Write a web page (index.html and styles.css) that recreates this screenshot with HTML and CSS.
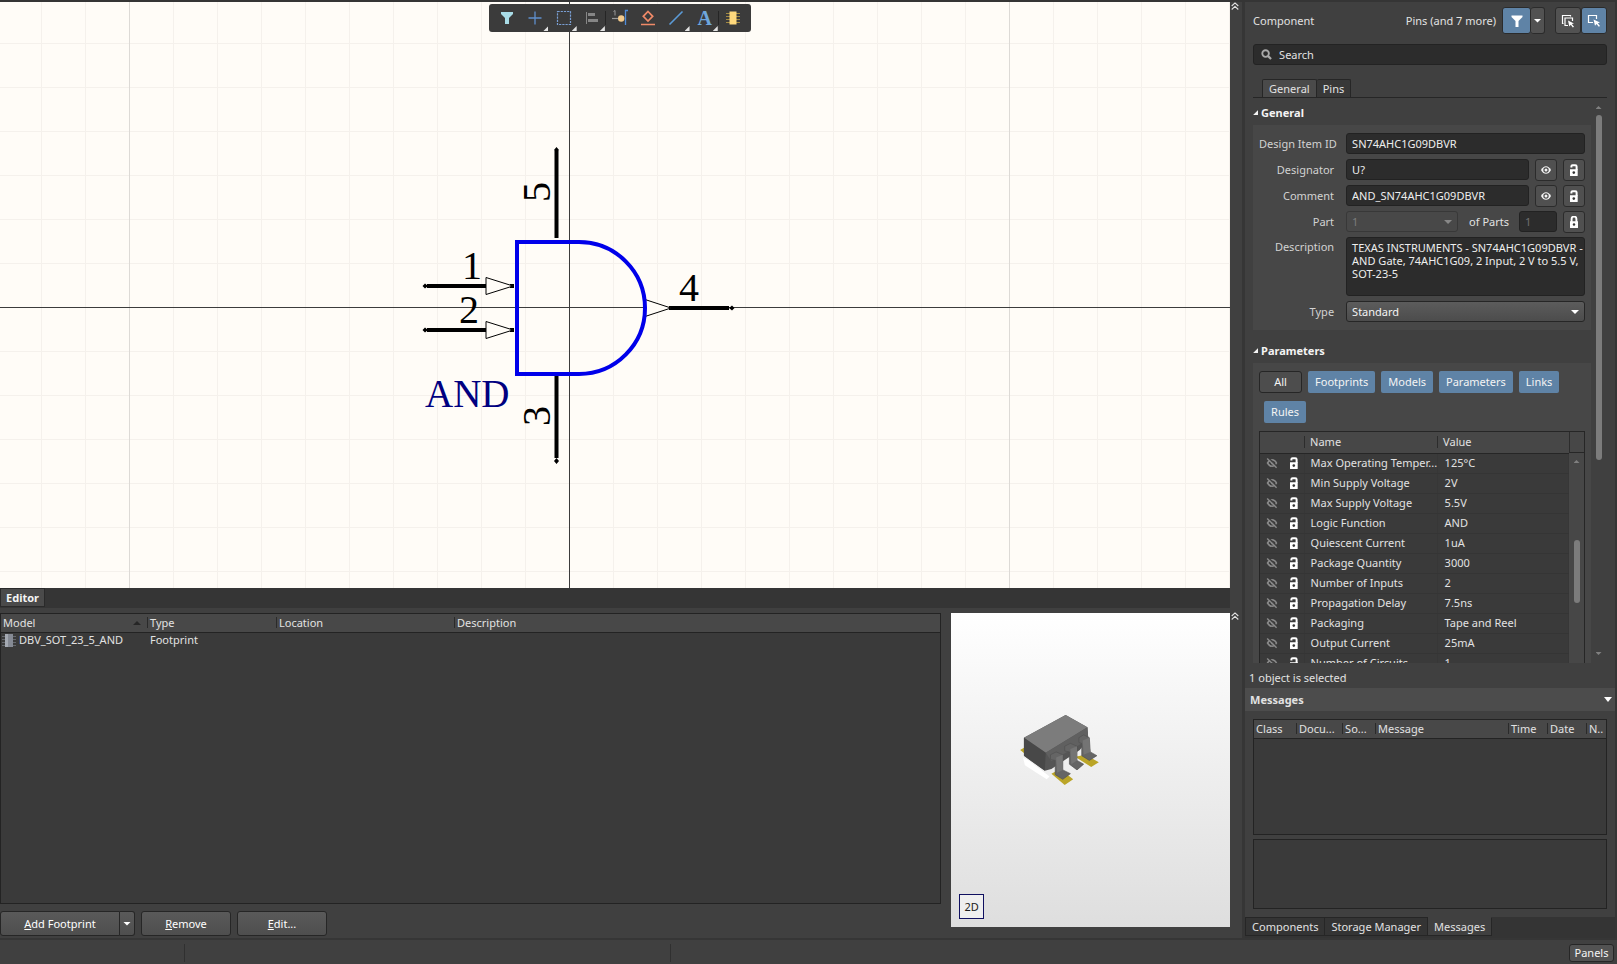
FILE: index.html
```
<!DOCTYPE html>
<html lang="en">
<head>
<meta charset="utf-8">
<title>Schematic Library Editor</title>
<link rel="stylesheet" href="styles.css">
</head>
<body>
<svg class="sprites" aria-hidden="true">
  <symbol id="eye" viewBox="0 0 12 12"><path d="M1 6C2.500 3.300 4 2.200 6 2.200S9.500 3.300 11 6C9.500 8.700 8 9.800 6 9.800S2.500 8.700 1 6Z" fill="#f4f4f4"/><circle cx="6" cy="6" r="2.700" fill="#4a4a4a"/><circle cx="6" cy="6" r="1.500" fill="#f4f4f4"/></symbol>
  <symbol id="eye-off" viewBox="0 0 12 12"><path d="M1.500 6C3 3.500 4.500 2.700 6 2.700S9.200 3.500 10.500 6C9.200 8.500 7.500 9.300 6 9.300S3 8.500 1.500 6Z" fill="none" stroke="#8a8a8a" stroke-width="1.500"/><circle cx="6.500" cy="6" r="1.500" fill="#8a8a8a"/><path d="M2.300 .8 11 9.500" stroke="#3a3a3a" stroke-width="1.300"/><path d="M1.200 1.400 10.600 10.800" stroke="#8a8a8a" stroke-width="1.400"/></symbol>
  <symbol id="unlocked" viewBox="0 0 12 12"><path d="M3.400 3.500V2.200Q3.400 1.200 4.500 1.200H7.300Q8.600 1.200 8.600 2.500V6" fill="none" stroke="#fff" stroke-width="2"/><path d="M2 5.300H9.700V11.500Q9.700 12 9.200 12H2.500Q2 12 2 11.500Z" fill="#fff"/><circle cx="5.800" cy="8.600" r="1.300" fill="#333"/></symbol>
  <symbol id="locked" viewBox="0 0 12 12"><path d="M3.600 6V3A2.400 2.400 0 0 1 8.400 3V6" fill="none" stroke="#fff" stroke-width="1.900"/><path d="M2 5.300H10V11.500Q10 12 9.500 12H2.500Q2 12 2 11.500Z" fill="#fff"/><circle cx="6" cy="8.500" r="1.200" fill="#333"/></symbol>
  <symbol id="collapse" viewBox="0 0 8 8"><path d="M.7 4 4 .9 7.300 4M.7 7.500 4 4.400 7.300 7.500" fill="none" stroke="#e4e4e4" stroke-width="1.100"/></symbol>
</svg>

<div class="workspace">
  <main class="document">
    <section class="canvas" aria-label="Symbol canvas">
      <svg class="drawing">
        <defs>
          <pattern id="minor" x="41" y="41" width="44" height="44" patternUnits="userSpaceOnUse"><path d="M0 .5H44M.5 0V44" stroke="#f5f1ec"/></pattern>
          <pattern id="major" x="129" y="-135" width="440" height="440" patternUnits="userSpaceOnUse"><path d="M0 .5H440M.5 0V440" stroke="#dddad6"/></pattern>
        </defs>
        <rect width="100%" height="100%" fill="url(#minor)"/>
        <rect width="100%" height="100%" fill="url(#major)"/>
        <path d="M0 305.500H4000M569.500 0V2000" stroke="#3c3c3c"/>
        <g stroke="#000" stroke-width="4" fill="none">
          <path d="M556.500 149V236M556.500 374V456M427 284H487M427 328H487M669 306H729"/>
          <path d="M510 284H514M510 328H514"/>
        </g>
        <path d="M486 275.500V292.500L513 284ZM486 319.500V336.500L513 328ZM645 297.500V314.500L671 306Z" fill="#fffcf7" stroke="#000"/>
        <path d="M422.500 284 425 281.500 428 284 425 286.500ZM422.500 328 425 325.500 428 328 425 330.500ZM734.500 306 732 303.500 729 306 732 308.500ZM556.500 145 559 148 556.500 151 554 148ZM556.500 462 559 459 556.500 456 554 459Z"/>
        <path d="M579 240H517V372H579A66 66 0 0 0 579 240Z" fill="none" stroke="#0000ea" stroke-width="4"/>
        <g class="pin-text">
          <text x="462" y="277">1</text>
          <text x="459" y="321">2</text>
          <text x="679" y="299">4</text>
          <text transform="translate(550 200) rotate(-90)">5</text>
          <text transform="translate(550 424) rotate(-90)">3</text>
          <text class="symbol-name" x="425" y="405">AND</text>
        </g>
      </svg>
      <div class="toolbar" role="toolbar">
        <button class="tool" aria-label="Filter"><svg viewBox="0 0 20 20"><path d="M4 4H16V6L12 10V16H8V10L4 6Z" fill="#a8dbe6"/></svg></button>
        <button class="tool more" aria-label="Move"><svg viewBox="0 0 20 20"><path d="M10 3.500V16.500M3.500 10H16.500" stroke="#5f8fcc" stroke-width="1.300"/></svg></button>
        <button class="tool more" aria-label="Select area"><svg viewBox="0 0 20 20"><rect x="3.500" y="3.500" width="13" height="13" fill="none" stroke="#7a9fd4" stroke-width="1.200" stroke-dasharray="2.200 1"/></svg></button>
        <button class="tool more split" aria-label="Align"><svg viewBox="0 0 20 20"><path d="M4.500 4V16" stroke="#868686"/><path d="M6 5H13V8H6ZM6 11H16V14H6Z" fill="#868686"/></svg></button>
        <button class="tool" aria-label="Place pin"><svg viewBox="0 0 20 20"><path d="M2 10.500H9" stroke="#999" stroke-width="1.200"/><path d="M3.500 3.500 5 2.500V7.500" fill="none" stroke="#999"/><path d="M18 2.500H15.500V17" fill="none" stroke="#4f8bd8" stroke-width="1.300"/><circle cx="11.200" cy="10.500" r="3.200" fill="#f3c98a"/></svg></button>
        <button class="tool" aria-label="Place shape"><svg viewBox="0 0 20 20"><path d="M10 3.500 14.700 8.300 10 13 5.300 8.300ZM3 16.500H17" fill="none" stroke="#f08a68" stroke-width="1.700"/></svg></button>
        <button class="tool more" aria-label="Place line"><svg viewBox="0 0 20 20"><path d="M3.500 16.500 16.500 3.500" stroke="#5b9bd8" stroke-width="1.600"/></svg></button>
        <button class="tool more split letter" aria-label="Place text">A</button>
        <button class="tool" aria-label="Place part"><svg viewBox="0 0 20 20"><path d="M3 5.500H17M3 8.500H17M3 11.500H17M3 14.500H17" stroke="#a38a43"/><rect x="6.500" y="3.500" width="7" height="13" fill="#ffd97c"/></svg></button>
      </div>
    </section>

    <section class="editor">
      <div class="editor-tabs"><button class="editor-tab">Editor</button></div>
      <div class="editor-body">
        <div class="models">
          <div class="model-box">
            <table class="grid model-table">
              <colgroup><col class="c-model"><col class="c-type"><col class="c-location"><col></colgroup>
              <thead><tr><th class="sorted">Model</th><th>Type</th><th>Location</th><th>Description</th></tr></thead>
              <tbody><tr><td><span class="model-name"><svg class="part-icon" viewBox="0 0 14 15"><path d="M0 3.500H14M0 6.500H14M0 9.500H14M0 12.500H14" stroke="#65686d"/><rect x="3" y="1" width="8" height="13" fill="#858a94"/><rect x="3" y="1" width="3" height="13" fill="#a4a9b2"/></svg>DBV_SOT_23_5_AND</span></td><td>Footprint</td><td></td><td></td></tr></tbody>
            </table>
          </div>
          <div class="actions">
            <div class="button-pair"><button class="action main"><u>A</u>dd Footprint</button><button class="action drop" aria-label="More footprint options"><i class="arrow"></i></button></div>
            <button class="action"><u>R</u>emove</button>
            <button class="action"><u>E</u>dit...</button>
          </div>
        </div>
        <div class="preview">
          <svg class="package" viewBox="0 0 84 76" aria-label="SOT-23-5 package">
            <path d="M4 46 10 49 32 66 29 69 6 54Z" fill="#fff"/>
            <path d="M1 38 6 35 10 40 6 42ZM34 63 48 75 57 69 43 58ZM59 45 76 56 84 51 70 43Z" fill="#bba527"/>
            <path d="M5 25 49 1 72 14 73 27 64 38 34 58 27 60 5 44Z" fill="#555"/>
            <path d="M5 25 49 1 72 14 28 41Z" fill="#7c7c7c"/>
            <path d="M5 25 28 41 27 60 5 44Z" fill="#484848"/>
            <path d="M28 41 72 14 73 27 34 50Z" fill="#606060"/>
            <path d="M33 43 39 40 46 43 46 59 54 63 46 69 38 64V49L33 48ZM48 34 54 31 61 34 61 49 68 53 61 59 53 53V40L48 39ZM63 25 68 22 74 25 75 40 82 44 74 49 66 44V31L63 30Z" fill="#656565" stroke="#505050" stroke-width=".7"/>
            <path d="M39 46 46 43V59L40 62ZM54 37 61 34V49L55 53ZM67 28 74 25 75 40 68 43Z" fill="#747474"/>
          </svg>
          <button class="view-mode">2D</button>
        </div>
      </div>
    </section>
  </main>

  <div class="gutter">
    <button class="collapse" aria-label="Collapse side panel"><svg><use href="#collapse"/></svg></button>
    <button class="collapse lower" aria-label="Collapse preview"><svg><use href="#collapse"/></svg></button>
  </div>

  <aside class="side">
    <section class="properties">
      <div class="object-row">
        <span>Component</span><span class="scope">Pins (and 7 more)</span>
        <div class="button-pair">
          <button class="square on filter" aria-label="Filter"><svg viewBox="0 0 16 16"><path d="M2.500 2.500H13.500V4L9.500 8V14H6.500V8L2.500 4Z" fill="#fff"/></svg></button><button class="square narrow" aria-label="Filter options"><i class="arrow"></i></button>
        </div>
        <div class="button-pair">
          <button class="square" aria-label="Select all"><svg viewBox="0 0 16 16"><path d="M3.500 10.500H2.500V2.500H10.500V3.500M8 12.500H5V5H12.500V8" fill="none" stroke="#fff" stroke-width="1.200"/><path d="M8 7.500 14 10.500 11.800 11 14 13.800 12.800 14.600 10.800 11.800 9.300 13.500Z" fill="#fff"/></svg></button><button class="square on" aria-label="Select one"><svg viewBox="0 0 16 16"><path d="M7 9.500H2.500V2.500H10.500V6" fill="none" stroke="#fff" stroke-width="1.200"/><path d="M7.500 6.500 14 9.500 11.800 10.200 14 13 12.800 13.800 10.600 11 9 12.700Z" fill="#fff"/></svg></button>
        </div>
      </div>
      <label class="search"><svg viewBox="0 0 12 12"><circle cx="5" cy="5" r="3.600" fill="none" stroke="#aaa" stroke-width="2"/><path d="M7.500 7.500 11 11" stroke="#aaa" stroke-width="2.400"/></svg><input type="search" placeholder="Search" aria-label="Search"></label>
      <div class="tabs"><button class="tab active">General</button><button class="tab">Pins</button></div>

      <div class="scroller">
        <div class="content">
          <h2 class="heading">General</h2>
          <div class="group fields">
            <label for="item">Design Item ID</label>
            <div class="field"><input id="item" value="SN74AHC1G09DBVR"></div>
            <label for="designator">Designator</label>
            <div class="field"><input id="designator" value="U?"><button class="mini" aria-label="Show designator"><svg><use href="#eye"/></svg></button><button class="mini" aria-label="Lock designator"><svg><use href="#unlocked"/></svg></button></div>
            <label for="comment">Comment</label>
            <div class="field"><input id="comment" value="AND_SN74AHC1G09DBVR"><button class="mini" aria-label="Show comment"><svg><use href="#eye"/></svg></button><button class="mini" aria-label="Lock comment"><svg><use href="#unlocked"/></svg></button></div>
            <label for="part">Part</label>
            <div class="field"><span class="select dim"><select id="part" disabled><option>1</option></select></span><label class="of-parts" for="parts">of Parts</label><input id="parts" class="count" value="1" disabled><button class="mini" aria-label="Lock part"><svg><use href="#locked"/></svg></button></div>
            <label class="top" for="description">Description</label>
            <div class="field tall"><textarea id="description">TEXAS INSTRUMENTS - SN74AHC1G09DBVR - AND Gate, 74AHC1G09, 2 Input, 2 V to 5.5 V, SOT-23-5</textarea></div>
            <label for="type">Type</label>
            <div class="field"><span class="select"><select id="type"><option>Standard</option></select></span></div>
          </div>

          <h2 class="heading second">Parameters</h2>
          <div class="group">
            <div class="chips">
              <button class="chip all">All</button><button class="chip">Footprints</button><button class="chip">Models</button><button class="chip">Parameters</button><button class="chip">Links</button><button class="chip wrapped">Rules</button>
            </div>
            <div class="params">
              <table class="param-table">
                <colgroup><col class="c-eye"><col class="c-lock"><col class="c-name"><col></colgroup>
                <thead><tr><th></th><th></th><th>Name</th><th>Value</th></tr></thead>
                <tbody>
                  <tr><td><svg><use href="#eye-off"/></svg></td><td><svg><use href="#unlocked"/></svg></td><td>Max Operating Temper...</td><td>125°C</td></tr>
                  <tr><td><svg><use href="#eye-off"/></svg></td><td><svg><use href="#unlocked"/></svg></td><td>Min Supply Voltage</td><td>2V</td></tr>
                  <tr><td><svg><use href="#eye-off"/></svg></td><td><svg><use href="#unlocked"/></svg></td><td>Max Supply Voltage</td><td>5.5V</td></tr>
                  <tr><td><svg><use href="#eye-off"/></svg></td><td><svg><use href="#unlocked"/></svg></td><td>Logic Function</td><td>AND</td></tr>
                  <tr><td><svg><use href="#eye-off"/></svg></td><td><svg><use href="#unlocked"/></svg></td><td>Quiescent Current</td><td>1uA</td></tr>
                  <tr><td><svg><use href="#eye-off"/></svg></td><td><svg><use href="#unlocked"/></svg></td><td>Package Quantity</td><td>3000</td></tr>
                  <tr><td><svg><use href="#eye-off"/></svg></td><td><svg><use href="#unlocked"/></svg></td><td>Number of Inputs</td><td>2</td></tr>
                  <tr><td><svg><use href="#eye-off"/></svg></td><td><svg><use href="#unlocked"/></svg></td><td>Propagation Delay</td><td>7.5ns</td></tr>
                  <tr><td><svg><use href="#eye-off"/></svg></td><td><svg><use href="#unlocked"/></svg></td><td>Packaging</td><td>Tape and Reel</td></tr>
                  <tr><td><svg><use href="#eye-off"/></svg></td><td><svg><use href="#unlocked"/></svg></td><td>Output Current</td><td>25mA</td></tr>
                  <tr><td><svg><use href="#eye-off"/></svg></td><td><svg><use href="#unlocked"/></svg></td><td>Number of Circuits</td><td>1</td></tr>
                </tbody>
              </table>
              <div class="param-scroll"><div class="param-corner"></div><i class="arrow up"></i><div class="param-thumb"></div></div>
            </div>
          </div>
        </div>
        <div class="scrollbar"><i class="arrow up"></i><div class="thumb"></div><i class="arrow faint"></i></div>
      </div>
      <p class="selection">1 object is selected</p>
    </section>

    <section class="messages">
      <h2 class="messages-title">Messages<i class="arrow"></i></h2>
      <div class="message-body">
        <div class="message-list">
          <table class="grid message-table">
            <colgroup><col class="c-class"><col class="c-docu"><col class="c-source"><col><col class="c-time"><col class="c-date"><col class="c-no"></colgroup>
            <thead><tr><th>Class</th><th>Docu...</th><th>So...</th><th>Message</th><th>Time</th><th>Date</th><th>N..</th></tr></thead>
          </table>
        </div>
        <div class="message-detail"></div>
      </div>
      <div class="panel-tabs"><button class="panel-tab">Components</button><button class="panel-tab">Storage Manager</button><button class="panel-tab active">Messages</button></div>
    </section>
  </aside>
</div>

<footer class="status"><div class="cell first"></div><div class="cell second-cell"></div><button class="panels">Panels</button></footer>
</body>
</html>
```

FILE: styles.css
```
* { box-sizing: border-box; }
body {
  margin: 0;
  height: 100vh;
  display: flex;
  flex-direction: column;
  overflow: hidden;
  background: #404040;
  color: #e2e2e2;
  font: 11px/14px "Noto Sans", "Open Sans", sans-serif;
}
button, input, select, textarea { font: inherit; color: inherit; margin: 0; }
button { padding: 0; border: 0; background: none; white-space: nowrap; }
.sprites { display: none; }
.workspace { flex: 1; min-height: 0; display: flex; border-top: 2px solid #353535; }
.document { flex: 1; min-width: 0; display: flex; flex-direction: column; }

.arrow {
  display: block;
  width: 8px;
  height: 4px;
  background: #fff;
  clip-path: polygon(0 0, 100% 0, 50% 100%);
}
.arrow.up { width: 6px; height: 3px; background: #808080; clip-path: polygon(50% 0, 100% 100%, 0 100%); }
.arrow.faint { width: 6px; height: 3px; background: #808080; }

/* Canvas */
.canvas { flex: 1; min-height: 0; position: relative; background: #fffcf7; }
.drawing { display: block; width: 100%; height: 100%; }
.pin-text { font: 40px "Liberation Serif", serif; fill: #000; }
.symbol-name { font-size: 39px; fill: #000080; }
.toolbar {
  position: absolute;
  top: 2px;
  left: 489px;
  width: 262px;
  height: 28px;
  padding: 0 4px;
  display: flex;
  background: #3b3b3b;
  border-radius: 3px;
}
.tool { flex: 1; display: grid; place-items: center; position: relative; }
.tool svg { width: 20px; height: 20px; }
.tool.more::after {
  content: "";
  position: absolute;
  right: 1px;
  bottom: 1px;
  width: 5px;
  height: 5px;
  background: #e4e4e4;
  clip-path: polygon(100% 0, 100% 100%, 0 100%);
}
.tool.split::before { content: ""; position: absolute; right: 0; top: 7px; width: 1px; height: 14px; background: #252525; }
.tool.letter { font: bold 20px/28px "Liberation Serif", serif; color: #6ea6dc; }

/* Model editor */
.editor { height: 350px; display: flex; flex-direction: column; }
.editor-tabs { height: 20px; background: #353535; }
.editor-tab {
  height: 19px;
  width: 45px;
  background: #4a4a4a;
  border: 1px solid #2a2a2a;
  font-weight: bold;
  color: #f4f4f4;
}
.editor-body { flex: 1; min-height: 0; display: flex; gap: 10px; padding-top: 5px; }
.models { flex: 1; min-width: 0; display: flex; flex-direction: column; gap: 7px; }
.model-box { height: 291px; border: 1px solid #232323; background: #3a3a3a; }
.grid { width: 100%; border-collapse: collapse; table-layout: fixed; }
.grid th {
  height: 18px;
  padding: 0 0 0 2px;
  text-align: left;
  font-weight: normal;
  white-space: nowrap;
  background: #484848;
  border-bottom: 1px solid #232323;
  line-height: 17px;
}
.grid th + th { background: linear-gradient(#2a2a2a, #2a2a2a) 0 3px / 1px 11px no-repeat #484848; padding-left: 3px; }
.grid td { height: 16px; padding: 0 0 0 3px; }
.c-model { width: 146px; }
.c-type { width: 129px; }
.c-location { width: 178px; }
.sorted { position: relative; }
.sorted::after {
  content: "";
  position: absolute;
  right: 6px;
  top: 7px;
  width: 8px;
  height: 4px;
  background: #262626;
  clip-path: polygon(50% 0, 100% 100%, 0 100%);
}
.model-name { display: flex; gap: 3px; }
.model-table td:first-child { padding-left: 1px; }
.part-icon { width: 14px; height: 15px; }
.actions { display: flex; gap: 6px; }
.button-pair { display: flex; }
.action {
  width: 90px;
  height: 25px;
  background: linear-gradient(#5a5a5a, #4e4e4e);
  border: 1px solid #262626;
  border-radius: 3px;
  color: #fff;
}
.action.main { width: 120px; border-radius: 3px 0 0 3px; }
.action.drop { width: 15px; display: grid; place-items: center; border-left: 0; border-radius: 0 3px 3px 0; }
.preview {
  width: 279px;
  height: 314px;
  position: relative;
  background: linear-gradient(#fff, #dedede);
}
.package { position: absolute; left: 68px; top: 101px; width: 80px; height: 72px; }
.view-mode {
  position: absolute;
  left: 8px;
  bottom: 8px;
  width: 25px;
  height: 25px;
  border: 1px solid #101060;
  background: #efefef;
  color: #202020;
}

.gutter {
  width: 15px;
  padding: 0 0 0 1px;
  display: flex;
  flex-direction: column;
  justify-content: space-between;
  border-right: 3px solid #363636;
}
.collapse { width: 8px; height: 8px; display: block; }
.collapse svg { display: block; width: 8px; height: 8px; }
.collapse.lower { margin-bottom: 318px; }

/* Side panels */
.side { flex: 0 0 23%; min-width: 0; display: flex; flex-direction: column; border-right: 2px solid #353535; }
.properties { flex: 1; min-height: 0; display: flex; flex-direction: column; padding: 5px 8px 0; }
.object-row { display: flex; align-items: center; height: 27px; }
.scope { margin-left: auto; margin-right: 6px; }
.object-row .button-pair + .button-pair { margin-left: 10px; }
.square {
  width: 26px;
  height: 27px;
  display: grid;
  place-items: center;
  background: #525252;
  border: 1px solid #2b2b2b;
  border-radius: 3px;
}
.square svg { width: 16px; height: 16px; }
.square.filter { width: 29px; }
.square.narrow { width: 14px; border-left: 0; }
.square.on { background: #5f83a6; }
.search {
  display: flex;
  align-items: center;
  gap: 7px;
  height: 21px;
  flex: none;
  margin-top: 10px;
  padding: 0 7px;
  background: #2c2c2c;
  border: 1px solid #232323;
  border-radius: 3px;
}
.search svg { width: 11px; height: 11px; flex: none; }
.search input { flex: 1; min-width: 0; background: none; border: 0; padding: 0; outline: 0; }
.search input::placeholder { color: #e2e2e2; opacity: 1; }
.tabs { display: flex; margin-top: 14px; padding-left: 9px; border-bottom: 1px solid #262626; flex: none; }
.tab {
  height: 18px;
  padding: 0 6px;
  background: #383838;
  border: 1px solid #262626;
  border-bottom: 0;
  border-radius: 2px 2px 0 0;
}
.tab.active { background: #4a4a4a; }
.tab + .tab { border-left: 0; }

.scroller { flex: 1; min-height: 0; display: flex; gap: 3px; overflow: hidden; }
.content { flex: 1; min-width: 0; }
.heading {
  display: flex;
  align-items: center;
  gap: 3px;
  margin: 7px 0 5px;
  font-size: 11px;
  line-height: 15px;
  color: #f4f4f4;
}
.heading::before { content: ""; width: 5px; height: 5px; background: #f4f4f4; clip-path: polygon(100% 0, 100% 100%, 0 100%); }
.heading.second { margin-top: 13px; }
.group { background: #474747; padding: 8px 6px; }
.fields { display: grid; grid-template-columns: 75px 1fr; column-gap: 12px; row-gap: 5px; align-items: center; }
.fields > label { text-align: right; color: #d2d2d2; white-space: nowrap; }
.fields > .top { align-self: start; padding-top: 3px; }
.field { display: flex; align-items: center; gap: 6px; height: 21px; min-width: 0; }
.field.tall { height: 59px; }
.field input, .field textarea {
  flex: 1;
  min-width: 0;
  height: 100%;
  padding: 0 5px;
  background: #2c2c2c;
  border: 1px solid #222;
  border-radius: 3px;
  color: #eee;
  outline: 0;
}
.field textarea { padding: 3px 0 0 5px; line-height: 13px; resize: none; overflow: hidden; }
.field .count { flex: 0 0 38px; color: #707070; }
.of-parts { margin: 0 4px 0 5px; white-space: nowrap; }
.mini {
  width: 22px;
  height: 22px;
  flex: none;
  display: grid;
  place-items: center;
  background: #505050;
  border: 1px solid #2b2b2b;
  border-radius: 3px;
}
.mini svg { width: 12px; height: 12px; }
.select { flex: 1; height: 100%; position: relative; }
.select::after {
  content: "";
  position: absolute;
  right: 6px;
  top: 9px;
  width: 8px;
  height: 4px;
  background: #fff;
  clip-path: polygon(0 0, 100% 0, 50% 100%);
}
.select select {
  width: 100%;
  height: 100%;
  padding: 0 5px;
  appearance: none;
  background: linear-gradient(#5c5c5c, #4c4c4c);
  border: 1px solid #262626;
  border-radius: 3px;
  color: #f4f4f4;
}
.select.dim select { background: #484848; border-color: #383838; color: #7c7c7c; opacity: 1; }
.dim::after { background: #888; }

.chips { display: flex; flex-wrap: wrap; gap: 8px 6px; }
.chip { height: 22px; padding: 0 7px; background: #5f83a6; border-radius: 2px; color: #f4f4f4; }
.chip.all { width: 43px; background: #4d4d4d; border: 1px solid #262626; border-radius: 3px; }
.chip.wrapped { margin-left: 5px; }
.params { display: flex; margin-top: 8px; border: 1px solid #262626; background: #3a3a3a; }
.param-table { flex: 1; width: 100%; min-width: 0; border-collapse: collapse; table-layout: fixed; }
.param-table th {
  height: 21px;
  padding: 0 0 0 6px;
  text-align: left;
  font-weight: normal;
  background: #474747;
  border-bottom: 1px solid #262626;
}
.param-table th:nth-child(n+3) { background: linear-gradient(#2c2c2c, #2c2c2c) 0 4px / 1px 12px no-repeat #474747; }
.param-table td {
  height: 20px;
  padding: 0 0 0 6px;
  border-bottom: 1px solid #353535;
  border-right: 1px solid #373737;
  white-space: nowrap;
}
.param-table td:nth-child(1) { border-right: 0; }
.param-table td:nth-child(4) { padding-left: 7px; }
.param-table svg { display: block; width: 12px; height: 12px; }
.c-eye { width: 22px; }
.c-lock { width: 22px; }
.c-name { width: 133px; }
.param-scroll { flex: 0 0 15px; display: flex; flex-direction: column; align-items: center; background: #474747; }
.param-corner { width: 100%; height: 21px; border-left: 1px solid #2c2c2c; border-bottom: 1px solid #262626; margin-bottom: 7px; }
.param-thumb { width: 6px; height: 63px; margin-top: 77px; background: #7c7c7c; border-radius: 3px; }
.scrollbar { flex: 0 0 13px; display: flex; flex-direction: column; align-items: center; padding: 8px 4px 8px 0; }
.thumb { width: 6px; height: 345px; margin-top: 6px; background: #7c7c7c; border-radius: 3px; }
.scrollbar .faint { margin-top: auto; }
.selection { margin: 0 -4px; height: 25px; line-height: 30px; flex: none; }

.messages-title {
  margin: 0;
  height: 23px;
  padding: 0 3px 0 5px;
  display: flex;
  align-items: center;
  justify-content: space-between;
  background: #4c4c4c;
  font-size: 11px;
}
.messages-title .arrow { height: 5px; }
.message-body { padding: 8px 8px; display: flex; flex-direction: column; gap: 4px; }
.message-list { height: 116px; border: 1px solid #232323; background: #3a3a3a; }
.message-detail { height: 70px; border: 1px solid #232323; background: #3a3a3a; }
.c-class { width: 42px; }
.c-docu { width: 46px; }
.c-source { width: 33px; }
.c-time { width: 39px; }
.c-date { width: 39px; }
.c-no { width: 20px; }
.panel-tabs { display: flex; height: 21px; background: #343434; }
.panel-tab { height: 19px; padding: 0 6px; background: #343434; border: 1px solid #262626; color: #e2e2e2; }
.panel-tab + .panel-tab { border-left: 0; }
.panel-tab.active { background: #404040; border-color: #404040 #262626 #262626 #404040; }

.status { height: 26px; display: flex; align-items: center; border-top: 2px solid #363636; padding: 2px 3px 0 0; }
.cell { height: 18px; border-right: 1px solid #303030; }
.first { width: 185px; }
.second-cell { width: 486px; }
.panels { width: 45px; height: 18px; margin-left: auto; background: #525252; border: 1px solid #262626; border-radius: 3px; color: #f4f4f4; }
```
